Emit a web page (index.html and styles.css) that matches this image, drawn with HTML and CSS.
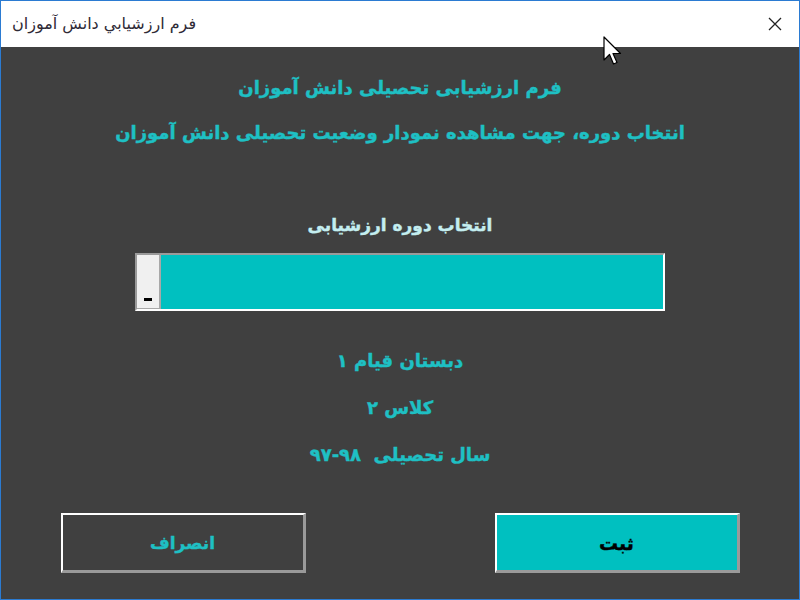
FILE: index.html
```html
<!DOCTYPE html>
<html lang="fa">
<head>
<meta charset="utf-8">
<title>فرم ارزشيابي دانش آموزان</title>
<link rel="stylesheet" href="styles.css">
</head>
<body>
<div class="window">
  <div class="titlebar">
    <span class="title" dir="rtl">فرم ارزشيابي دانش آموزان</span>
    <svg class="close" width="14" height="14" viewBox="0 0 14 14"><path d="M1 1 L13 13 M13 1 L1 13" stroke="#222" stroke-width="1.3" fill="none"/></svg>
  </div>
  <div class="content" dir="rtl">
    <div class="h1">فرم ارزشیابی تحصیلی دانش آموزان</div>
    <div class="h2">انتخاب دوره، جهت مشاهده نمودار وضعیت تحصیلی دانش آموزان</div>
    <div class="label">انتخاب دوره ارزشیابی</div>
    <div class="combo" dir="ltr">
      <div class="combo-btn"><span class="dash"></span></div>
      <div class="combo-field"></div>
    </div>
    <div class="info">
      <div class="info-line">دبستان قیام ۱</div>
      <div class="info-line">کلاس ۲</div>
      <div class="info-line">سال تحصیلی&nbsp; <span dir="ltr">۹۷-۹۸</span></div>
    </div>
    <div class="buttons" dir="ltr">
      <div class="btn btn-cancel">انصراف</div>
      <div class="btn btn-ok">ثبت</div>
    </div>
  </div>
  <svg class="cursor" width="20" height="30" viewBox="0 0 20 30"><path d="M1 1 L1 24 L6.5 18.5 L10.5 28 L14 26.5 L10 17.5 L17.5 17.5 Z" fill="#fff" stroke="#000" stroke-width="1.2" stroke-linejoin="round"/></svg>
</div>
</body>
</html>
```
FILE: styles.css
```css
html, body {
  margin: 0;
  padding: 0;
  background: #404040;
}
.window {
  position: relative;
  width: 800px;
  height: 600px;
  box-sizing: border-box;
  border: 1px solid #2b7bd2;
  background: #404040;
  overflow: hidden;
  font-family: "DejaVu Sans", sans-serif;
}
.titlebar {
  height: 46px;
  background: #ffffff;
  display: flex;
  align-items: center;
  justify-content: space-between;
  padding: 0 17px 0 11px;
}
.title {
  font-family: "DejaVu Sans", sans-serif;
  font-size: 16px;
  color: #2e2a36;
  padding-bottom: 2px;
}
.close {
  display: block;
}
.content {
  display: flex;
  flex-direction: column;
  align-items: center;
  text-align: center;
}
.h1, .h2 {
  color: #1ec0c4;
  font-weight: bold;
  font-size: 18px;
  line-height: 24px;
  -webkit-text-stroke: 0.4px #1ec0c4;
}
.h1 {
  margin-top: 29px;
}
.h2 {
  margin-top: 21px;
}
.label {
  margin-top: 68px;
  color: #c4eef0;
  font-weight: bold;
  font-size: 17px;
  line-height: 24px;
  -webkit-text-stroke: 0.4px #c4eef0;
}
.combo {
  margin-top: 16px;
  width: 530px;
  height: 58px;
  box-sizing: border-box;
  border-top: 2px solid #9a9a9a;
  border-left: 2px solid #9a9a9a;
  border-right: 2px solid #ffffff;
  border-bottom: 2px solid #ffffff;
  display: flex;
}
.combo-btn {
  width: 22px;
  background: #f0f0f0;
  border-right: 2px solid #a8a8a8;
  border-bottom: 1px solid #a8a8a8;
  position: relative;
}
.dash {
  position: absolute;
  left: 7px;
  bottom: 7px;
  width: 8px;
  height: 3px;
  background: #000;
}
.combo-field {
  flex: 1;
  background: #00c0c0;
}
.info {
  margin-top: 37px;
  display: flex;
  flex-direction: column;
  gap: 21px;
}
.info-line {
  color: #1ec0c4;
  font-weight: bold;
  font-size: 18px;
  line-height: 26px;
  -webkit-text-stroke: 0.4px #1ec0c4;
}
.buttons {
  margin-top: 45px;
  width: 679px;
  display: flex;
  justify-content: space-between;
}
.btn {
  width: 245px;
  height: 60px;
  box-sizing: border-box;
  border-top: 2px solid #ffffff;
  border-left: 2px solid #ffffff;
  border-right: 3px solid #9a9a9a;
  border-bottom: 3px solid #9a9a9a;
  display: flex;
  align-items: center;
  justify-content: center;
  font-weight: bold;
  font-size: 17px;
}
.btn-cancel {
  background: #404040;
  color: #1ec0c4;
  -webkit-text-stroke: 0.4px #1ec0c4;
}
.btn-ok {
  background: #00c0c0;
  color: #000;
  font-size: 19px;
  -webkit-text-stroke: 0.4px #000;
}
.cursor {
  position: absolute;
  left: 602px;
  top: 35px;
}
```
